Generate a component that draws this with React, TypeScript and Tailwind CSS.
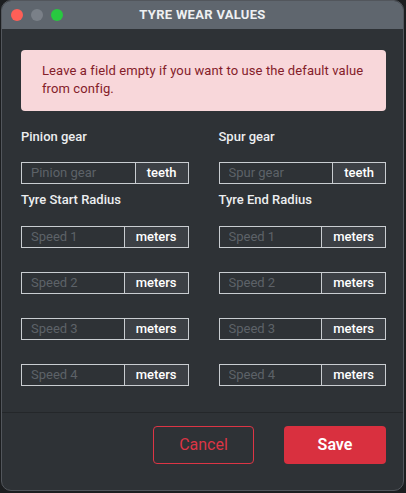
const SPEEDS = ['Speed 1', 'Speed 2', 'Speed 3', 'Speed 4'];

function InputGroup({ placeholder, unit }: { placeholder: string; unit: string }) {
  return (
    <div className="flex h-[22px] border border-[#c9cdd1]">
      <input
        className="min-w-0 flex-1 bg-transparent px-[9px] text-[13px] text-[#e5e7ea] outline-none placeholder:text-[#5d6268]"
        placeholder={placeholder}
      />
      <span className="flex items-center border-l border-[#c9cdd1] bg-[#3c4045] px-[11px] text-[13px] font-medium text-white">
        {unit}
      </span>
    </div>
  );
}

function Label({ children }: { children: string }) {
  return <div className="text-[13px] leading-[18px] font-medium text-[#eceef0]">{children}</div>;
}

export default function App() {
  return (
    <div className="h-[493px] w-[406px] bg-[#1c1e20] font-['Roboto',sans-serif]">
      <div className="flex h-[491px] w-[403px] translate-x-[1px] flex-col overflow-hidden rounded-[10px] border border-[#52565c] bg-[#2e3236]">
        <div className="relative flex h-[28px] shrink-0 items-center justify-center bg-[#5f666e]">
          <div className="absolute left-[9px] top-[8px] flex gap-[8px]">
            <span className="h-[12px] w-[12px] rounded-full bg-[#fe5f57]" />
            <span className="h-[12px] w-[12px] rounded-full bg-[#7a8088]" />
            <span className="h-[12px] w-[12px] rounded-full bg-[#28c840]" />
          </div>
          <span className="text-[13px] font-bold tracking-[0.3px] text-[#eef0f2]">TYRE WEAR VALUES</span>
        </div>

        <div className="flex-1 pl-[19px] pr-[17px] pt-[21px]">
          <div className="rounded-[4px] bg-[#f8d7da] pl-[21px] pr-5 pt-3 pb-[13px] text-[13px] leading-[18px] tracking-[0.1px] text-[#842029]">
            Leave a field empty if you want to use the default value from config.
          </div>

          <div className="mt-[17px] grid grid-cols-2 gap-x-[30px]">
            <div>
              <Label>Pinion gear</Label>
              <div className="mt-[16px]">
                <InputGroup placeholder="Pinion gear" unit="teeth" />
              </div>
            </div>
            <div>
              <Label>Spur gear</Label>
              <div className="mt-[16px]">
                <InputGroup placeholder="Spur gear" unit="teeth" />
              </div>
            </div>
            <div className="mt-[7px]">
              <Label>Tyre Start Radius</Label>
              <div className="mt-[17px] flex flex-col gap-[24px]">
                {SPEEDS.map((s) => (
                  <InputGroup key={s} placeholder={s} unit="meters" />
                ))}
              </div>
            </div>
            <div className="mt-[7px]">
              <Label>Tyre End Radius</Label>
              <div className="mt-[17px] flex flex-col gap-[24px]">
                {SPEEDS.map((s) => (
                  <InputGroup key={s} placeholder={s} unit="meters" />
                ))}
              </div>
            </div>
          </div>
        </div>

        <div className="flex h-[78px] shrink-0 items-start justify-end gap-[30px] border-t border-[#24272a] px-[17px] pt-[13px]">
          <button className="h-[38px] w-[101px] rounded-[4px] border border-[#dc3545] text-[16px] text-[#dc3545]">
            Cancel
          </button>
          <button className="h-[38px] w-[102px] rounded-[4px] bg-[#d9303f] text-[16px] font-semibold text-white">
            Save
          </button>
        </div>
      </div>
    </div>
  );
}
